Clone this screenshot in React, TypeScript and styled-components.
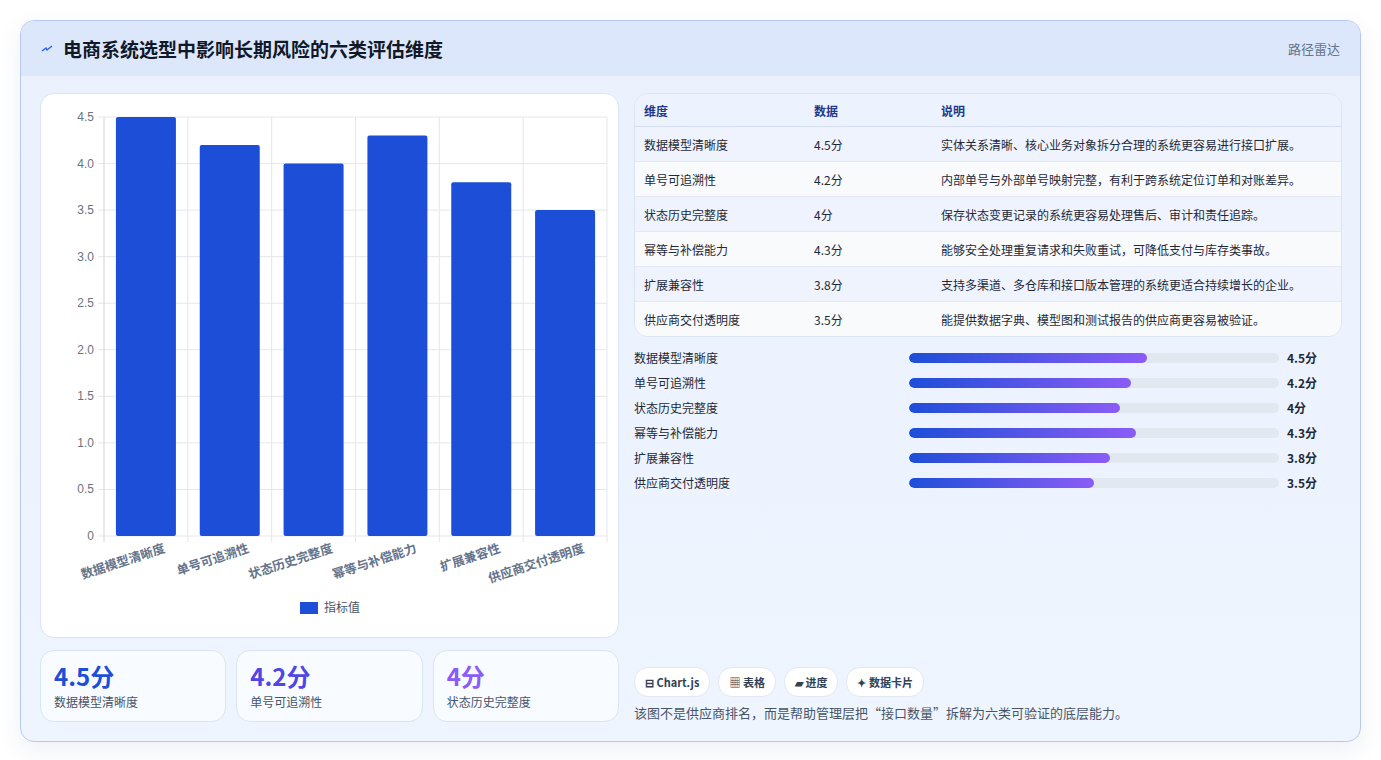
import React from 'react';
import styled, { createGlobalStyle } from 'styled-components';

const Global = createGlobalStyle`
  body { margin: 0; background: #fff; font-family: "Noto Sans CJK SC", "Noto Sans", sans-serif; }
`;

const data = [
  { name: '数据模型清晰度', value: 4.5, desc: '实体关系清晰、核心业务对象拆分合理的系统更容易进行接口扩展。' },
  { name: '单号可追溯性', value: 4.2, desc: '内部单号与外部单号映射完整，有利于跨系统定位订单和对账差异。' },
  { name: '状态历史完整度', value: 4, desc: '保存状态变更记录的系统更容易处理售后、审计和责任追踪。' },
  { name: '幂等与补偿能力', value: 4.3, desc: '能够安全处理重复请求和失败重试，可降低支付与库存类事故。' },
  { name: '扩展兼容性', value: 3.8, desc: '支持多渠道、多仓库和接口版本管理的系统更适合持续增长的企业。' },
  { name: '供应商交付透明度', value: 3.5, desc: '能提供数据字典、模型图和测试报告的供应商更容易被验证。' },
];

const Page = styled.div`
  width: 1381px;
  height: 760px;
  padding: 20px;
  box-sizing: border-box;
`;

const Frame = styled.div`
  height: 720px;
  border: 1px solid #b9c8f0;
  border-radius: 14px;
  background: linear-gradient(180deg, #eaf1fd 0%, #eef5ff 100%);
  overflow: hidden;
  box-shadow: 0 8px 24px rgba(30, 60, 140, 0.08);
  display: flex;
  flex-direction: column;
`;

const Header = styled.div`
  height: 55px;
  background: #dde7fc;
  display: flex;
  align-items: center;
  justify-content: space-between;
  padding: 0 20px;
`;

const Title = styled.h1`
  margin: 0;
  font-size: 19px;
  font-weight: 700;
  color: #111827;
  display: flex;
  align-items: center;
  gap: 10px;
`;

const HeaderLink = styled.span`
  font-size: 13px;
  color: #64748b;
`;

const Body = styled.div`
  flex: 1;
  display: grid;
  grid-template-columns: 579px 708px;
  gap: 15px;
  padding: 17px 19px 19px 19px;
`;

const Column = styled.div`
  display: flex;
  flex-direction: column;
  gap: 12px;
  min-height: 0;
`;

const Card = styled.div`
  background: #fff;
  border: 1px solid #dbe4f3;
  border-radius: 14px;
`;

const ChartCard = styled(Card)`
  height: 543px;
`;

const KpiRow = styled.div`
  display: grid;
  grid-template-columns: repeat(3, 1fr);
  gap: 10px;
`;

const Kpi = styled(Card)`
  height: 72px;
  padding: 10px 13px;
  box-sizing: border-box;
  background: #f8fbff;
`;

const KpiValue = styled.div<{ $color: string }>`
  font-size: 24px;
  font-weight: 700;
  line-height: 30px;
  color: ${p => p.$color};
`;

const KpiLabel = styled.div`
  font-size: 12px;
  color: #475569;
  margin-top: 2px;
`;

const Table = styled.table`
  width: 100%;
  border-collapse: collapse;
  font-size: 12px;
  color: #1f2937;
`;

const TableWrap = styled(Card)`
  overflow: hidden;
  background: #f4f8ff;
`;

const Th = styled.th`
  text-align: left;
  font-weight: 600;
  color: #1e3a8a;
  height: 32px;
  padding: 0 9px;
  background: #edf3fe;
  border-bottom: 1px solid #d5def0;
`;

const Tr = styled.tr<{ $alt: boolean }>`
  background: ${p => (p.$alt ? '#f8fafc' : '#eef3fe')};
  td { height: 34px; padding: 0 9px; border-bottom: 1px solid #e2e8f4; }
  &:last-child td { border-bottom: none; }
`;

const Progress = styled.div`
  display: flex;
  flex-direction: column;
  gap: 9px;
  padding-top: 0;
`;

const PRow = styled.div`
  display: grid;
  grid-template-columns: 267px 370px auto;
  align-items: center;
  gap: 8px;
  font-size: 12px;
  color: #1f2937;
  height: 16px;
`;

const Track = styled.div`
  height: 10px;
  border-radius: 5px;
  background: #e2e8f0;
  overflow: hidden;
`;

const Fill = styled.div`
  height: 100%;
  border-radius: 5px;
  background: linear-gradient(90deg, #1d4ed8, #8b5cf6);
`;

const PValue = styled.span`
  font-weight: 700;
`;

const Spacer = styled.div`
  flex: 1;
`;

const Chips = styled.div`
  display: flex;
  gap: 8px;
`;

const Chip = styled.span`
  height: 28px;
  padding: 0 10px;
  border-radius: 14px;
  border: 1px solid #e2e8f0;
  background: #fff;
  display: flex;
  align-items: center;
  font-size: 11px;
  font-weight: 600;
  color: #334155;
`;

const Note = styled.p`
  margin: 6px 0 0;
  font-size: 13px;
  color: #475569;
`;

const Bolt = () => (
  <svg width="12" height="12" viewBox="0 0 12 12">
    <path d="M1 8 L5 5 L6 7 L11 3" stroke="#2563eb" strokeWidth="1.4" fill="none" />
  </svg>
);

const BarChart = () => {
  const x0 = 63, x1 = 566, y0 = 23, y1 = 442;
  const step = (x1 - x0) / data.length;
  const yv = (v: number) => y1 - (v / 4.5) * (y1 - y0);
  const ticks = [0, 0.5, 1, 1.5, 2, 2.5, 3, 3.5, 4, 4.5];
  return (
    <svg width="579" height="543" fontFamily="Liberation Sans, sans-serif">
      {ticks.map(t => (
        <g key={t}>
          <line x1={x0 - 6} x2={x1} y1={yv(t)} y2={yv(t)} stroke="#e5e7eb" />
          <text x={x0 - 10} y={yv(t) + 4} fontSize="12" fill="#6b7280" textAnchor="end">
            {t === 0 ? '0' : t.toFixed(1)}
          </text>
        </g>
      ))}
      {data.map((d, i) => (
        <line key={i} x1={x0 + step * (i + 1)} x2={x0 + step * (i + 1)} y1={y0} y2={y1 + 6} stroke="#e5e7eb" />
      ))}
      <line x1={x0} x2={x0} y1={y0} y2={y1 + 6} stroke="#d1d5db" />
      {data.map((d, i) => {
        const cx = x0 + step * (i + 0.5);
        return (
          <g key={d.name}>
            <rect x={cx - 30} y={yv(d.value)} width="60" height={y1 - yv(d.value)} rx="2" fill="#1d4ed8" />
            <text
              x={cx + 20}
              y={y1 + 16}
              fontSize="12.5"
              fontWeight="700"
              fill="#64748b"
              textAnchor="end"
              fontFamily="Noto Sans CJK SC, sans-serif"
              transform={`rotate(-18 ${cx + 20} ${y1 + 16})`}
            >
              {d.name}
            </text>
          </g>
        );
      })}
      <rect x="259" y="508" width="18" height="12" fill="#1d4ed8" />
      <text x="283" y="518" fontSize="12" fill="#475569" fontFamily="Noto Sans CJK SC, sans-serif">指标值</text>
    </svg>
  );
};

const kpiColors = ['#1d4ed8', '#4f46e5', '#8b5cf6'];

export default function App() {
  return (
    <Page>
      <Global />
      <Frame>
        <Header>
          <Title><Bolt />电商系统选型中影响长期风险的六类评估维度</Title>
          <HeaderLink>路径雷达</HeaderLink>
        </Header>
        <Body>
          <Column>
            <ChartCard><BarChart /></ChartCard>
            <KpiRow>
              {data.slice(0, 3).map((d, i) => (
                <Kpi key={d.name}>
                  <KpiValue $color={kpiColors[i]}>{d.value}分</KpiValue>
                  <KpiLabel>{d.name}</KpiLabel>
                </Kpi>
              ))}
            </KpiRow>
          </Column>
          <Column>
            <TableWrap>
              <Table>
                <thead>
                  <tr>
                    <Th style={{ width: 152 }}>维度</Th>
                    <Th style={{ width: 109 }}>数据</Th>
                    <Th>说明</Th>
                  </tr>
                </thead>
                <tbody>
                  {data.map((d, i) => (
                    <Tr key={d.name} $alt={i % 2 === 1}>
                      <td>{d.name}</td>
                      <td>{d.value}分</td>
                      <td>{d.desc}</td>
                    </Tr>
                  ))}
                </tbody>
              </Table>
            </TableWrap>
            <Progress>
              {data.map(d => (
                <PRow key={d.name}>
                  <span>{d.name}</span>
                  <Track><Fill style={{ width: `${(d.value / 7) * 100}%` }} /></Track>
                  <PValue>{d.value}分</PValue>
                </PRow>
              ))}
            </Progress>
            <Spacer />
            <div>
              <Chips>
                <Chip>⊟ Chart.js</Chip>
                <Chip>▦ 表格</Chip>
                <Chip>▰ 进度</Chip>
                <Chip>✦ 数据卡片</Chip>
              </Chips>
              <Note>该图不是供应商排名，而是帮助管理层把“接口数量”拆解为六类可验证的底层能力。</Note>
            </div>
          </Column>
        </Body>
      </Frame>
    </Page>
  );
}
